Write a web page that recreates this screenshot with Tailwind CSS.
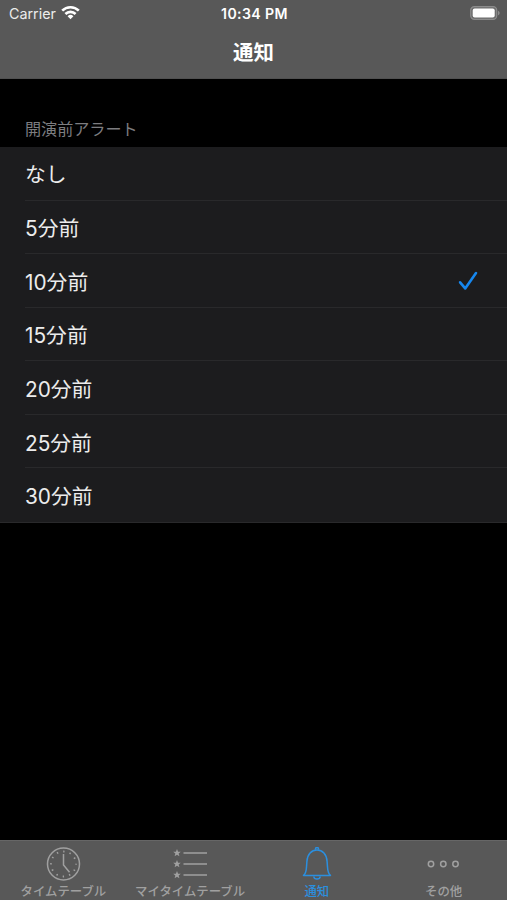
<!DOCTYPE html>
<html lang="ja">
<head>
<meta charset="utf-8">
<title>通知</title>
<script src="https://cdn.jsdelivr.net/npm/@tailwindcss/browser@4"></script>
</head>
<body class="bg-black">
<div class="w-[507px] h-[900px] flex flex-col overflow-hidden bg-black text-[#ececec] font-['Inter','Noto_Sans_CJK_JP',sans-serif]">
  <header class="h-[79px] shrink-0 bg-[#585858] border-b border-[#505050]">
    <div class="h-[27px] grid grid-cols-3 items-center pl-[9px] pr-[7px] text-[14.3px] leading-[27px]">
      <div class="flex items-center gap-[5px]">
        <span>Carrier</span>
        <svg class="w-[19px] h-[15px] -mt-[2px]" viewBox="0 0 19 15" fill="none" stroke="#fff" stroke-width="2.6">
          <path d="M1.2 5.7a11.8 11.8 0 0 1 16.6 0M4.4 9a7.2 7.2 0 0 1 10.2 0"/>
          <path d="M9.5 14.2 6.6 11.2a4.1 4.1 0 0 1 5.8 0z" fill="#fff" stroke="none"/>
        </svg>
      </div>
      <span class="text-center font-semibold text-[14.1px] tracking-[0.4px] text-white whitespace-nowrap">10:34 PM</span>
      <svg class="w-[30px] h-[14px] -mt-px justify-self-end" viewBox="0 0 30 14">
        <rect x=".7" y=".7" width="26" height="12.6" rx="3.6" fill="#6c6c6c" stroke="#8c8c8c" stroke-width="1.2"/>
        <rect x="2.7" y="2.5" width="22" height="9" rx="2" fill="#fff"/>
        <path d="M28 4.7v4.6c2.2-.8 2.2-3.8 0-4.6z" fill="#8c8c8c"/>
      </svg>
    </div>
    <h1 class="text-center text-[20.5px] leading-[52px] font-bold text-white">通知</h1>
  </header>
  <main class="flex-1">
    <h2 class="h-[68px] pt-[38px] pl-[25px] text-[16.1px] leading-[24px] text-[#7d7d80]">開演前アラート</h2>
    <ul class="h-[376px] bg-[#1c1c1e] border-b border-[#29292b] grid grid-rows-7 pl-[25px] text-[20.8px]">
      <li class="flex items-center pt-[3px] border-b border-[#29292b]">なし</li>
      <li class="flex items-center pt-[4px] border-b border-[#29292b]">5分前</li>
      <li class="flex items-center justify-between pt-[4px] pr-[29px] border-b border-[#29292b]">10分前
        <svg class="w-[20px] h-[20px] -mt-[2px]" viewBox="0 0 20 20" fill="none" stroke="#1687ef" stroke-width="2.6" stroke-linecap="round" stroke-linejoin="round"><path d="M2.1 11.3 7.2 17.4 18 2.1"/></svg>
      </li>
      <li class="flex items-center pt-[4px] border-b border-[#29292b]">15分前</li>
      <li class="flex items-center pt-[4px] border-b border-[#29292b]">20分前</li>
      <li class="flex items-center pt-[4px] border-b border-[#29292b]">25分前</li>
      <li class="flex items-center pt-[3px]">30分前</li>
    </ul>
  </main>
  <nav class="h-[60px] shrink-0 bg-[#585858] border-t border-[#666] grid grid-cols-4 text-[12.4px] leading-[14px] font-medium text-[#a0a0a0]">
    <div class="flex flex-col items-center pt-[6px] gap-[4px]">
      <svg class="w-[36px] h-[34px]" viewBox="0 0 36 34" fill="none" stroke="currentColor" stroke-width="1.5">
        <circle cx="18.5" cy="17" r="16"/>
        <path d="M18.500 7v11l6 7.200"/>
        <circle cx="18.500" cy="17" r="12.500" stroke-width="1.800" stroke-dasharray="1.400 5.145" stroke-dashoffset=".7"/>
      </svg>
      <span class="whitespace-nowrap">タイムテーブル</span>
    </div>
    <div class="flex flex-col items-center pt-[6px] gap-[4px]">
      <svg class="w-[36px] h-[34px]" viewBox="0 0 36 34" fill="currentColor">
        <defs><path id="star" d="M0-4 1.05-1.25 3.8-1.2 1.65.55 2.4 3.3 0 1.7-2.4 3.3-1.65.55-3.8-1.2-1.05-1.25z"/></defs>
        <use href="#star" x="5" y="6"/><use href="#star" x="5" y="17"/><use href="#star" x="5" y="28"/>
        <path d="M11.5 6H35M11.5 17H35M11.5 28H35" stroke="currentColor" stroke-width="1.500"/>
      </svg>
      <span class="whitespace-nowrap">マイタイムテーブル</span>
    </div>
    <div class="flex flex-col items-center pt-[6px] gap-[4px] text-[#2b8fdf]">
      <svg class="w-[36px] h-[34px]" viewBox="0 0 36 34" fill="none" stroke="currentColor" stroke-width="1.5" stroke-linejoin="round">
        <path d="M4.500 28.400c2.200-1.800 2.800-4.700 3-8.400l.4-5.500C8.300 7.400 12.600 3 18 3s9.700 4.400 10.100 11.500l.4 5.500c.2 3.700.8 6.600 3 8.400z"/>
        <path d="M16.500 2.800V2a1.500 1.500 0 0 1 3 0v.8M14.800 29.500c.3 3.400 6.100 3.400 6.400 0"/>
      </svg>
      <span>通知</span>
    </div>
    <div class="flex flex-col items-center pt-[6px] gap-[4px]">
      <svg class="w-[36px] h-[34px]" viewBox="0 0 36 34" fill="none" stroke="currentColor" stroke-width="1.5">
        <circle cx="5" cy="17" r="2.700"/><circle cx="17.300" cy="17" r="2.700"/><circle cx="29.500" cy="17" r="2.700"/>
      </svg>
      <span>その他</span>
    </div>
  </nav>
</div>
</body>
</html>
